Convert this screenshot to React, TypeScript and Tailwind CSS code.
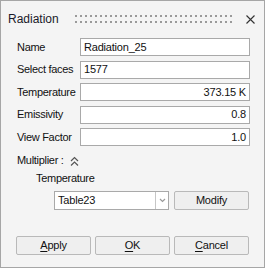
import React from 'react';

const font = { fontFamily: '"Liberation Sans", Arial, sans-serif' };

const Field: React.FC<{ label: string; value: string; right?: boolean }> = ({ label, value, right }) => (
  <div className="flex items-center h-[18px]">
    <span className="w-[63px] shrink-0 whitespace-nowrap text-[11px] tracking-[-0.3px] text-[#111]">{label}</span>
    <div
      className={`flex-1 h-full flex items-center bg-white border border-[#a9a9a9] px-[3px] text-[11px] tracking-[-0.2px] text-[#111] ${
        right ? 'justify-end' : ''
      }`}
    >
      {value}
    </div>
  </div>
);

const Btn: React.FC<{ children: React.ReactNode }> = ({ children }) => (
  <button className="w-[75px] h-[19px] flex items-center justify-center bg-[#efefef] border border-[#b9b9b9] rounded-[2px] text-[11px] tracking-[-0.2px] text-[#111]">
    {children}
  </button>
);

// drag grip: two rows of small square dots
const Grip = () => (
  <svg width="158" height="8" viewBox="0 0 158 8" className="ml-[16px]">
    <defs>
      <pattern id="grip" width="5" height="6" patternUnits="userSpaceOnUse">
        <rect x="0" y="0" width="2" height="2" fill="#9a9a9a" />
      </pattern>
    </defs>
    <rect x="0" y="0" width="158" height="8" fill="url(#grip)" />
  </svg>
);

export default function App() {
  return (
    <div style={font} className="w-[265px] h-[268px] bg-[#f4f4f4] border border-[#a6a6a6] flex flex-col">
      {/* title bar */}
      <div className="flex items-center h-[37px] pl-[7px] pr-[9px] pb-[1px]">
        <span className="text-[12px] text-[#1a1a2a]">Radiation</span>
        <Grip />
        <svg width="9" height="9" viewBox="0 0 9 9" className="ml-auto">
          <path d="M0.5 0.5 L8.5 8.5 M8.5 0.5 L0.5 8.5" stroke="#333" strokeWidth="1.1" />
        </svg>
      </div>

      {/* fields */}
      <div className="flex flex-col gap-[4.5px] pl-[16px] pr-[14px]">
        <Field label="Name" value="Radiation_25" />
        <Field label="Select faces" value="1577" />
        <Field label="Temperature" value="373.15 K" right />
        <Field label="Emissivity" value="0.8" right />
        <Field label="View Factor" value="1.0" right />
      </div>

      {/* multiplier */}
      <div className="flex items-center mt-[7px] pl-[16px] h-[14px] text-[11px] tracking-[-0.3px] text-[#111]">
        <span>Multiplier :</span>
        <svg width="9" height="10" viewBox="0 0 9 10" className="ml-[6px] mt-[1px]">
          <path d="M1 5 L4.5 1.5 L8 5 M1 9.5 L4.5 6 L8 9.5" fill="none" stroke="#555" strokeWidth="1.2" />
        </svg>
      </div>

      <div className="pl-[35px] mt-[4px] h-[14px] flex items-center text-[11px] tracking-[-0.3px] text-[#111]">Temperature</div>

      <div className="flex items-center gap-[5px] pl-[53px] pr-[14px] mt-[6px]">
        <div className="flex w-[115px] h-[19px] bg-white border border-[#a9a9a9]">
          <div className="flex-1 flex items-center px-[3px] text-[11px] tracking-[-0.2px] text-[#111]">Table23</div>
          <div className="w-[13px] flex items-center justify-center border-l border-[#c6c6c6]">
            <svg width="7" height="5" viewBox="0 0 7 5">
              <path d="M1 1 L3.5 3.5 L6 1" fill="none" stroke="#9a9a9a" strokeWidth="1.2" />
            </svg>
          </div>
        </div>
        <Btn>Modify</Btn>
      </div>

      {/* footer buttons */}
      <div className="flex gap-[4px] pl-[15px] mt-[26px]">
        <Btn>
          <span className="underline underline-offset-[2px]">A</span>pply
        </Btn>
        <Btn>
          <span className="underline underline-offset-[2px]">O</span>K
        </Btn>
        <Btn>
          <span className="underline underline-offset-[2px]">C</span>ancel
        </Btn>
      </div>
    </div>
  );
}
